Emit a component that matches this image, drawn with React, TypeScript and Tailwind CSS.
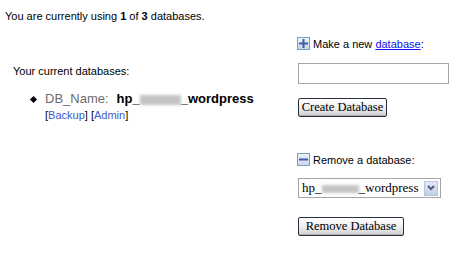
import React from 'react';

const Blur = ({ w, h }: { w: string; h: string }) => (
  <span className={`inline-block align-middle ${w} ${h} bg-[#c4c4c4] blur-[1.5px]`} />
);

const PlusIcon = () => (
  <span className="flex items-center justify-center w-[13px] h-[13px] border border-[#7f9db9] bg-gradient-to-b from-[#eef3fb] to-[#c9d6ec]">
    <svg width="9" height="9" viewBox="0 0 9 9">
      <rect x="0" y="3.5" width="9" height="2" fill="#3b5ea8" />
      <rect x="3.5" y="0" width="2" height="9" fill="#3b5ea8" />
    </svg>
  </span>
);

const MinusIcon = () => (
  <span className="flex items-center justify-center w-[13px] h-[13px] border border-[#7f9db9] bg-gradient-to-b from-[#eef3fb] to-[#c9d6ec]">
    <svg width="9" height="9" viewBox="0 0 9 9">
      <rect x="0" y="3.5" width="9" height="2" fill="#3b5ea8" />
    </svg>
  </span>
);

const XpButton = ({ label, width }: { label: string; width: string }) => (
  <button
    className={`block ${width} h-[19px] p-0 rounded-[2px] border border-[#26303f] bg-gradient-to-b from-white via-[#f0f0f0] to-[#cfcfcf] font-['Liberation_Serif',serif] text-[12.5px] leading-[17px] text-black text-center whitespace-nowrap shadow-[inset_0_-1px_0_#b0b0b0]`}
  >
    {label}
  </button>
);

export default function App() {
  return (
    <div className="w-[461px] h-[255px] bg-white font-['Liberation_Sans',Arial,sans-serif] text-black">
      <p className="pl-[5px] pt-[9px] text-[11px] leading-[14px]">
        You are currently using <b>1</b> of <b>3</b> databases.
      </p>

      <div className="flex">
        {/* Left: current databases */}
        <div className="w-[297px] pl-[13px] pt-[41px]">
          <p className="text-[11px] leading-[14px]">Your current databases:</p>
          <div className="flex mt-[13px]">
            <div className="w-[32px] flex justify-end pr-[9px] pt-[6px]">
              <span className="w-[5px] h-[5px] rotate-45 bg-black" />
            </div>
            <div>
              <div className="text-[13px] leading-[16px] whitespace-nowrap">
                <span className="text-[#6b6b6b]">DB_Name:</span>
                <span className="ml-[8px] font-bold">
                  hp_<Blur w="w-[41px]" h="h-[10px]" />_wordpress
                </span>
              </div>
              <div className="mt-[1px] text-[11px] leading-[14px]">
                [<span className="text-[#3a5bd0]">Backup</span>] [<span className="text-[#3a5bd0]">Admin</span>]
              </div>
            </div>
          </div>
        </div>

        {/* Right: actions */}
        <div className="w-[164px] pt-[14px]">
          <div className="flex items-end gap-[3px]">
            <PlusIcon />
            <span className="text-[11px] leading-[12px]">
              Make a new <span className="text-[#1010ee] underline">database</span>:
            </span>
          </div>
          <div className="mt-[13px] ml-[1px] w-[151px] h-[21px] border border-[#a5a5a5] bg-white" />
          <div className="mt-[14px] ml-[1px]">
            <XpButton label="Create Database" width="w-[89px]" />
          </div>

          <div className="mt-[36px] flex items-end gap-[3px]">
            <MinusIcon />
            <span className="text-[11px] leading-[12px]">Remove a database:</span>
          </div>
          <div className="mt-[12px] ml-[1px] w-[143px] h-[20px] border border-[#a5a5a5] bg-white flex items-center justify-between pl-[3px] pr-[2px]">
            <span className="font-['Liberation_Serif',serif] text-[13px] leading-[16px] whitespace-nowrap">
              hp_<Blur w="w-[37px]" h="h-[8px]" />_wordpress
            </span>
            <span className="w-[14px] h-[15px] border border-[#b5c3dc] bg-gradient-to-b from-[#e4eaf5] to-[#c3cfe4] flex items-center justify-center">
              <svg width="8" height="6" viewBox="0 0 8 6">
                <path d="M1 1 L4 4 L7 1" stroke="#4a5f86" strokeWidth="2" fill="none" />
              </svg>
            </span>
          </div>
          <div className="mt-[19px] ml-[1px]">
            <XpButton label="Remove Database" width="w-[106px]" />
          </div>
        </div>
      </div>
    </div>
  );
}
